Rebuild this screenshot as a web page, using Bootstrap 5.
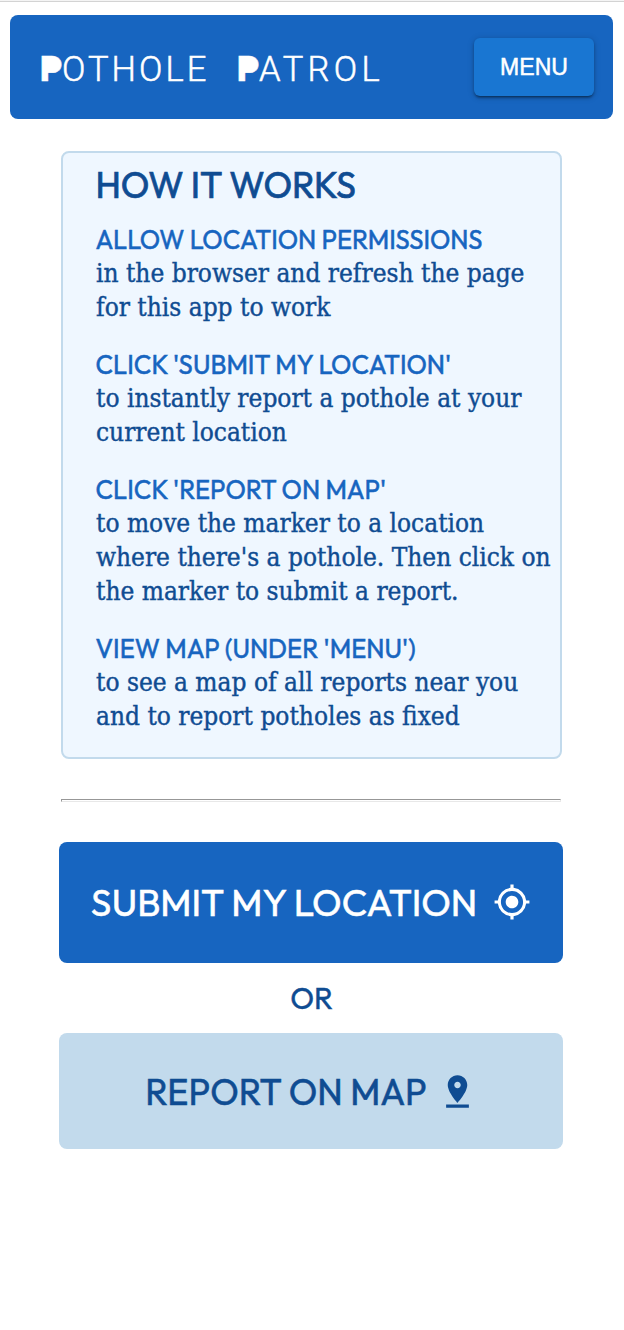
<!DOCTYPE html>
<html lang="en">
<head>
<meta charset="utf-8">
<meta name="viewport" content="width=device-width, initial-scale=1">
<title>Pothole Patrol</title>
<link rel="stylesheet" href="https://cdn.jsdelivr.net/npm/bootstrap@5.3.0/dist/css/bootstrap.min.css">
<script src="https://cdn.jsdelivr.net/npm/bootstrap@5.3.0/dist/js/bootstrap.bundle.min.js"></script>
<style>
  :root { --blue: #1765c0; --navy: #0f4c92; --sky: #c2daec; }
  body { font-family: Outfit, Lato, sans-serif; color: var(--navy); background: #fff; }
  .top-edge { height: 2px; background: #f4f4f4; border-bottom: 1px solid #d3d3d3; }
  .masthead { margin: 13px 11px 0 10px; height: 104px; padding: 0 19px 0 30px; border-radius: 8px; background: var(--blue); }
  .brand { padding-top: 3px; font: 300 34.5px/40px Roboto, sans-serif; color: #fff; gap: 27.5px; -webkit-text-stroke: .5px #fff; }
  .brand-a { letter-spacing: 3.1px; }
  .brand-b { letter-spacing: 4.3px; }
  .brand .cap { position: relative; font-weight: 900; letter-spacing: -.6px; }
  .brand .cap::after { content: ""; position: absolute; left: 6px; top: 11px; width: 12px; height: 12px; background: #fff; border-radius: 0 6px 6px 0; }
  .btn-menu { width: 120px; height: 58px; padding: 0; border: 0; border-radius: 6px; background: #1976d2; color: #fff;
    font: 400 23px/58px "Liberation Sans", sans-serif; letter-spacing: .1px; -webkit-text-stroke: .5px #fff;
    box-shadow: 0 3px 2px -2px rgba(0,0,0,.3), 0 2px 3px rgba(0,0,0,.25), 0 1px 7px rgba(0,0,0,.18); }
  .panel { margin: 32px 62px 0 61px; height: 608px; padding: 12px 0 0 33px; border: 2px solid var(--sky); border-radius: 8px; background: #eff7ff; }
  .panel h1 { font-size: 36px; line-height: 40px; font-weight: 400; margin: 0 0 17px -.5px; letter-spacing: -.08px; -webkit-text-stroke: .7px; }
  .panel h2 { font-size: 25.6px; line-height: 34px; height: 34px; padding-top: 1px; font-weight: 400; margin: 0 0 0 -.5px; color: var(--blue); -webkit-text-stroke: .5px; }
  .panel p { font: 400 26px/34px "DejaVu Serif", serif; font-stretch: condensed; margin: 0 0 23px; white-space: nowrap; -webkit-text-stroke: .4px; }
  .rule { margin: 40px 63px 0 61px; height: 3px; opacity: 1; border: 1px solid; border-color: #979797 #e8e8e8 #e8e8e8 #979797; }
  .btn-act { margin: 0 61px 0 59px; border-radius: 8px; -webkit-text-stroke: .5px; }
  .submit { margin-top: 40px; height: 121px; padding-bottom: 1px; background: var(--blue); color: #fff; font-size: 37.2px; letter-spacing: -.05px; }
  .submit span { padding-top: 2px; }
  .report { height: 116px; padding-top: 1px; background: var(--sky); color: var(--navy); font-size: 35.9px; }
  .or { font-size: 30px; height: 70px; line-height: 70px; padding-right: 1px; -webkit-text-stroke: .4px; }
  .pin { margin-left: 11px; }
</style>
</head>
<body>
<div class="top-edge"></div>
<header class="masthead d-flex align-items-center justify-content-between">
  <div class="brand d-flex"><span class="brand-a"><span class="cap">P</span>OTHOLE</span> <span class="brand-b"><span class="cap">P</span>ATROL</span></div>
  <button class="btn btn-menu" type="button">MENU</button>
</header>
<main>
  <section class="panel">
    <h1>HOW IT WORKS</h1>
    <h2>ALLOW LOCATION PERMISSIONS</h2>
    <p>in the browser and refresh the page<br>for this app to work</p>
    <h2>CLICK 'SUBMIT MY LOCATION'</h2>
    <p>to instantly report a pothole at your<br>current location</p>
    <h2>CLICK 'REPORT ON MAP'</h2>
    <p>to move the marker to a location<br>where there's a pothole. Then click on<br>the marker to submit a report.</p>
    <h2>VIEW MAP (UNDER 'MENU')</h2>
    <p>to see a map of all reports near you<br>and to report potholes as fixed</p>
  </section>
  <hr class="rule">
  <a class="btn-act submit d-flex align-items-center justify-content-center text-decoration-none" href="#">
    <span>SUBMIT MY LOCATION</span>
    <svg class="ms-3" width="38" height="38" viewBox="0 0 24 24" fill="currentColor" aria-hidden="true"><path d="M12 8c-2.21 0-4 1.79-4 4s1.79 4 4 4 4-1.79 4-4-1.79-4-4-4zm8.94 3A8.994 8.994 0 0 0 13 3.06V1h-2v2.06A8.994 8.994 0 0 0 3.06 11H1v2h2.060A8.994 8.994 0 0 0 11 20.940V23h2v-2.060A8.994 8.994 0 0 0 20.940 13H23v-2h-2.060zM12 19c-3.870 0-7-3.130-7-7s3.130-7 7-7 7 3.130 7 7-3.130 7-7 7z"/></svg>
  </a>
  <div class="or text-center">OR</div>
  <a class="btn-act report d-flex align-items-center justify-content-center text-decoration-none" href="#">
    <span>REPORT ON MAP</span>
    <svg class="pin" width="39" height="39" viewBox="0 0 24 24" fill="currentColor" aria-hidden="true"><path d="M18 8c0-3.310-2.690-6-6-6S6 4.690 6 8c0 4.500 6 11 6 11s6-6.500 6-11zm-8 0c0-1.100.9-2 2-2s2 .9 2 2-.89 2-2 2-2-.9-2-2zM5 20v2h14v-2H5z"/></svg>
  </a>
</main>
</body>
</html>
